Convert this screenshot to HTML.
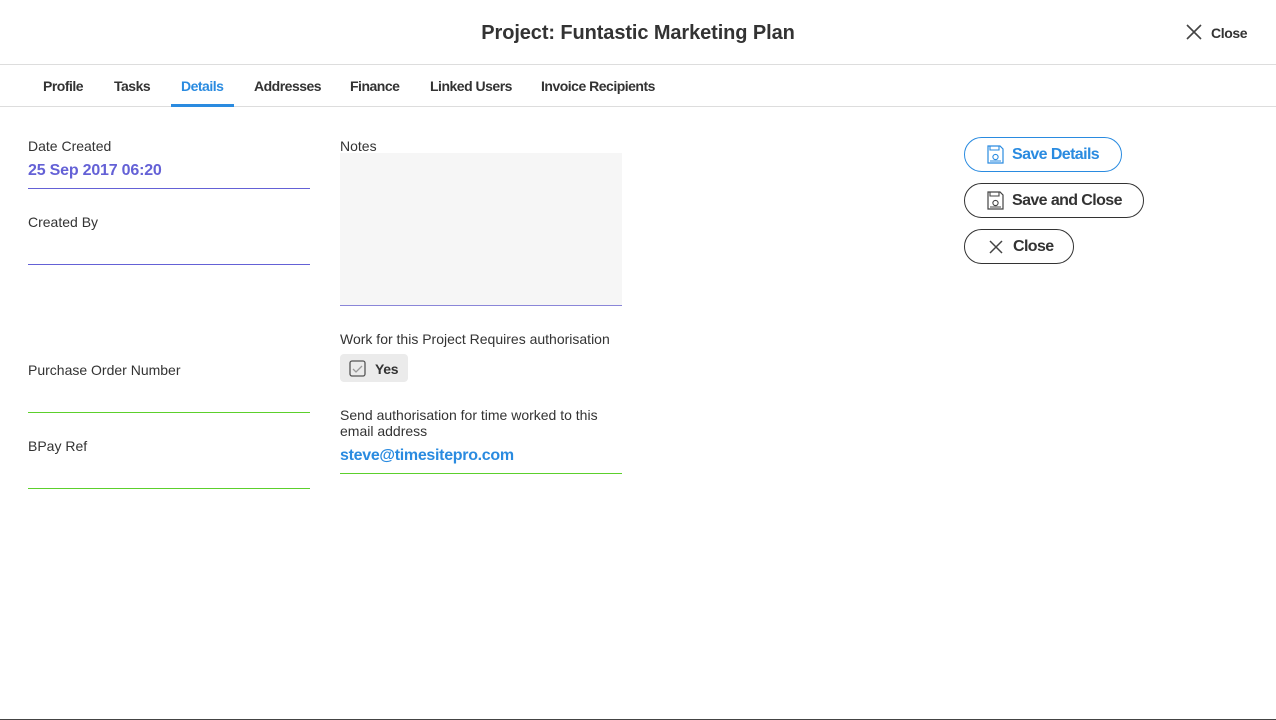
<!DOCTYPE html>
<html><head><style>
*{margin:0;padding:0;box-sizing:border-box}
body{width:1276px;height:720px;background:#fff;font-family:"Liberation Sans",sans-serif;color:#333;position:relative;overflow:hidden}
.a{position:absolute;white-space:nowrap}
.lbl{font-size:14px;color:#333}
.line{position:absolute;height:1px}
.tab{position:absolute;top:78px;font-size:14px;font-weight:bold;color:#333;letter-spacing:-0.5px}
.btn{position:absolute;left:964px;height:35px;border:1px solid #333;border-radius:18px;font-size:16px;font-weight:bold;color:#333;display:flex;align-items:center;padding-left:22px;letter-spacing:-0.6px}
.btn svg{margin-right:8px}
</style></head><body>
<div class="a" style="left:0;right:0;top:22px;text-align:center;font-size:20px;font-weight:bold;color:#333;letter-spacing:-0.1px">Project: Funtastic Marketing Plan</div>
<svg class="a" style="left:1186px;top:24px" width="16" height="16" viewBox="0 0 16 16"><path d="M1 1L15 15M15 1L1 15" stroke="#444" stroke-width="1.6"/></svg>
<div class="a" style="left:1211px;top:25px;font-size:14px;font-weight:bold;color:#333;letter-spacing:-0.4px">Close</div>
<div class="line" style="left:0;right:0;top:64px;background:#ddd"></div>
<div class="tab" style="left:43px">Profile</div>
<div class="tab" style="left:114px">Tasks</div>
<div class="tab" style="left:181px;color:#2a8be0">Details</div>
<div class="tab" style="left:254px">Addresses</div>
<div class="tab" style="left:350px">Finance</div>
<div class="tab" style="left:430px">Linked Users</div>
<div class="tab" style="left:541px">Invoice Recipients</div>
<div class="line" style="left:0;right:0;top:106px;background:#ddd"></div>
<div class="a" style="left:171px;top:104px;width:63px;height:3px;background:#2a8be0"></div>

<div class="a lbl" style="left:28px;top:138px">Date Created</div>
<div class="a" style="left:28px;top:162px;font-size:16px;font-weight:bold;color:#6461d6;letter-spacing:-0.2px">25 Sep 2017 06:20</div>
<div class="line" style="left:28px;width:282px;top:188px;background:#6461d6"></div>
<div class="a lbl" style="left:28px;top:214px">Created By</div>
<div class="line" style="left:28px;width:282px;top:264px;background:#6461d6"></div>
<div class="a lbl" style="left:28px;top:362px">Purchase Order Number</div>
<div class="line" style="left:28px;width:282px;top:412px;background:#5cd02c"></div>
<div class="a lbl" style="left:28px;top:438px">BPay Ref</div>
<div class="line" style="left:28px;width:282px;top:488px;background:#5cd02c"></div>

<div class="a lbl" style="left:340px;top:138px">Notes</div>
<div class="a" style="left:340px;top:153px;width:282px;height:152px;background:#f6f6f6"></div>
<div class="line" style="left:340px;width:282px;top:305px;background:#8a86d8"></div>
<div class="a lbl" style="left:340px;top:331px">Work for this Project Requires authorisation</div>
<div class="a" style="left:340px;top:354px;width:68px;height:28px;background:#ebebeb;border-radius:4px"></div>
<svg class="a" style="left:349px;top:360px" width="18" height="18" viewBox="0 0 18 18"><rect x="1" y="1" width="15" height="15" rx="2" fill="none" stroke="#555" stroke-width="1.3"/><path d="M4 9l3 3 6-6" fill="none" stroke="#999" stroke-width="1.3"/></svg>
<div class="a" style="left:375px;top:361px;font-size:14px;font-weight:bold;color:#333;letter-spacing:-0.3px">Yes</div>
<div class="a lbl" style="left:340px;top:407px;line-height:16px">Send authorisation for time worked to this<br>email address</div>
<div class="a" style="left:340px;top:447px;font-size:16px;font-weight:bold;color:#2a8be0;letter-spacing:-0.3px">steve@timesitepro.com</div>
<div class="line" style="left:340px;width:282px;top:473px;background:#5cd02c"></div>

<div class="btn" style="top:137px;width:158px;border-color:#2a8be0;color:#2a8be0"><svg width="17" height="19" viewBox="0 0 17 19"><path d="M1 1h12l3 3v14H1z" fill="none" stroke="#2a8be0" stroke-width="1.2"/><path d="M3 1v4h9V1" fill="none" stroke="#2a8be0" stroke-width="1.1"/><circle cx="8.5" cy="12" r="2.6" fill="none" stroke="#2a8be0" stroke-width="1.1"/><path d="M3 16h11" stroke="#2a8be0"/></svg>Save Details</div>
<div class="btn" style="top:183px;width:180px"><svg width="17" height="19" viewBox="0 0 17 19"><path d="M1 1h12l3 3v14H1z" fill="none" stroke="#444" stroke-width="1.2"/><path d="M3 1v4h9V1" fill="none" stroke="#444" stroke-width="1.1"/><circle cx="8.5" cy="12" r="2.6" fill="none" stroke="#444" stroke-width="1.1"/><path d="M3 16h11" stroke="#444"/></svg>Save and Close</div>
<div class="btn" style="top:229px;width:110px"><svg width="14" height="14" viewBox="0 0 14 14" style="margin-left:2px;margin-right:10px"><path d="M1 1L13 13M13 1L1 13" stroke="#444" stroke-width="1.5"/></svg>Close</div>
<div class="line" style="left:0;right:0;top:719px;background:#444"></div>
</body></html>
